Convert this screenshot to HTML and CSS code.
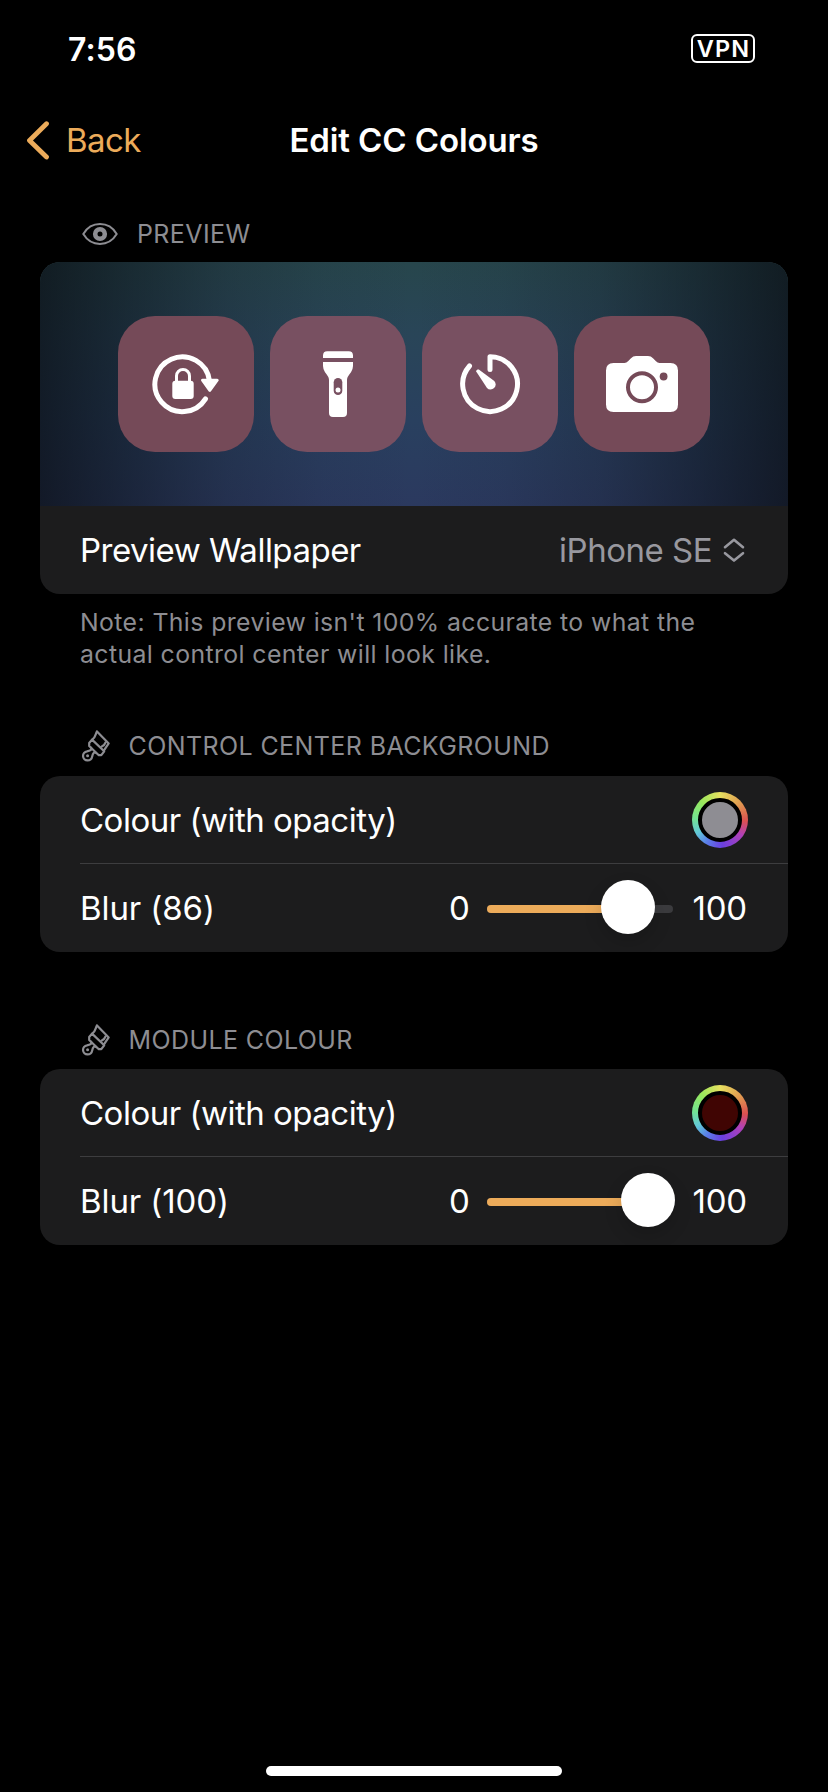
FILE: index.html
```html
<!DOCTYPE html>
<html lang="en">
<head>
<meta charset="utf-8">
<title>Edit CC Colours</title>
<link rel="stylesheet" href="styles.css">
</head>
<body>
<svg class="defs" width="0" height="0" aria-hidden="true">
  <symbol id="brush" viewBox="0 0 32 34">
    <g fill="none" stroke="currentColor" stroke-width="2.2" stroke-linejoin="round" stroke-linecap="round">
      <path d="M17 2.400 28.700 14.400 23.800 21.600M17 2.400C15.400 4.800 16 8 12.200 10.700"/>
      <path d="M12 10.600 24.200 22.300 21.300 26.100 18.800 26.200 9.200 17 9.200 14Z"/>
      <path d="M25.600 13.400C24.900 15.600 23.500 16.900 21.400 17.700"/>
      <path d="M11 18.600C12.600 20.700 9.600 21.800 7 22.300A4.600 4.600 0 1 0 12.200 27.400C12.800 24.600 14.200 22.300 16.200 24"/>
    </g>
    <circle cx="7.600" cy="26.700" r="1.500" fill="currentColor"/>
  </symbol>
</svg>
<main class="screen">
  <div class="status">
    <span class="time">7:56</span>
    <span class="vpn">VPN</span>
  </div>
  <header class="nav">
    <a class="back">
      <svg class="back-icon" width="24" height="40" viewBox="0 0 24 40"><path d="M20.500 3.700 3.500 20.500 20.500 37" fill="none" stroke="currentColor" stroke-width="4.800" stroke-linecap="round" stroke-linejoin="round"/></svg>
      <span class="back-label">Back</span>
    </a>
    <h1 class="title">Edit CC Colours</h1>
  </header>

  <section class="section">
    <h2 class="section-head section-head--preview">
      <svg width="36" height="24" viewBox="0 0 36 24"><path d="M1.300 12C4.600 6.500 10.800 2.100 18 2.100S31.400 6.500 34.700 12C31.400 17.500 25.200 21.900 18 21.900S4.600 17.500 1.300 12Z" fill="none" stroke="currentColor" stroke-width="2"/><circle cx="18" cy="12" r="4.800" fill="none" stroke="currentColor" stroke-width="4.600"/></svg>
      <span class="head-preview">PREVIEW</span>
    </h2>
    <div class="card">
      <div class="wallpaper">
        <div class="tile">
          <svg width="72" height="72" viewBox="0 0 72 72"><path d="M59.500 33A27.400 27.400 0 1 0 55.500 50.800" fill="none" stroke="#fff" stroke-width="5" stroke-linecap="round"/><path d="M52.500 32.200 67.200 32.200 59.800 42.300Z" fill="#fff" stroke="#fff" stroke-width="3" stroke-linejoin="round"/><rect x="22.300" y="32.700" width="21.400" height="18.300" rx="3" fill="#fff"/><path d="M26.500 34.500V28A6.500 6.500 0 0 1 39.500 28V34.500" fill="none" stroke="#fff" stroke-width="3"/></svg>
        </div>
        <div class="tile tile--inner">
          <svg width="72" height="72" viewBox="0 0 72 72"><path d="M21 10V7.500Q21 3.200 25.300 3.200H46.700Q51 3.200 51 7.500V10ZM21 14H51V18Q51 21 49 24.300 45 29 45 32V65Q45 69 41 69H31Q27 69 27 65V32Q27 29 23 24.300 21 21 21 18Z" fill="#fff"/><rect class="torch-slot" x="31.700" y="30" width="8.600" height="17" rx="4.300"/><circle cx="36" cy="42" r="2.500" fill="#fff"/></svg>
        </div>
        <div class="tile tile--inner">
          <svg width="72" height="72" viewBox="0 0 72 72"><path d="M15.500 18A27.400 27.400 0 1 0 36 8.700V21.500" fill="none" stroke="#fff" stroke-width="5" stroke-linecap="round" stroke-linejoin="round"/><path d="M24.800 21.600 40.300 33A5 5 0 1 1 33 39.900L22.200 23.400Q22.300 20.800 24.800 21.600Z" fill="#fff"/></svg>
        </div>
        <div class="tile">
          <svg width="72" height="72" viewBox="0 0 72 72"><path d="M7.500 15H18.500Q20.500 15 22 13.200L25 10.200Q27 8 30 8H42Q45 8 47 10.200L50 13.200Q51.500 15 53.500 15H64.500Q72 15 72 22.500V56.500Q72 64 64.500 64H7.500Q0 64 0 56.500V22.500Q0 15 7.500 15Z" fill="#fff"/><circle class="lens-ring" cx="36" cy="39.300" r="14"/><circle class="flash" cx="57.600" cy="28.500" r="3.900"/></svg>
        </div>
      </div>
      <div class="row">
        <span class="row-label">Preview Wallpaper</span>
        <span class="picker">
          <span class="picker-value">iPhone SE</span>
          <svg width="22" height="26" viewBox="0 0 22 26"><path d="M2 10.200 11 2.800 20 10.200M2 16.200 11 23.600 20 16.200" fill="none" stroke="currentColor" stroke-width="2.600" stroke-linecap="round" stroke-linejoin="round"/></svg>
        </span>
      </div>
    </div>
    <p class="note">Note: This preview isn't 100% accurate to what the<br>actual control center will look like.</p>
  </section>

  <section class="section section--background">
    <h2 class="section-head">
      <svg width="32" height="34"><use href="#brush"/></svg>
      <span>CONTROL CENTER BACKGROUND</span>
    </h2>
    <div class="card">
      <div class="row row--divided">
        <span class="row-label">Colour (with opacity)</span>
        <span class="well"><span class="well-fill well-fill--grey"></span></span>
      </div>
      <div class="row">
        <span class="row-label row-label--blur">Blur (86)</span>
        <span class="slider">
          <span class="bound">0</span>
          <span class="track"><span class="track-fill" style="width:141px"></span><span class="thumb" style="left:114px"></span></span>
          <span class="bound bound--max">100</span>
        </span>
      </div>
    </div>
  </section>

  <section class="section section--module">
    <h2 class="section-head">
      <svg width="32" height="34"><use href="#brush"/></svg>
      <span>MODULE COLOUR</span>
    </h2>
    <div class="card">
      <div class="row row--divided">
        <span class="row-label">Colour (with opacity)</span>
        <span class="well"><span class="well-fill well-fill--maroon"></span></span>
      </div>
      <div class="row">
        <span class="row-label row-label--blur">Blur (100)</span>
        <span class="slider">
          <span class="bound">0</span>
          <span class="track"><span class="track-fill" style="width:161px"></span><span class="thumb" style="left:134px"></span></span>
          <span class="bound bound--max">100</span>
        </span>
      </div>
    </div>
  </section>

  <div class="home"></div>
</main>
</body>
</html>
```
FILE: styles.css
```css
* { box-sizing: border-box; }
body {
  margin: 0;
  background: #000;
  color: #fff;
  font-family: Inter, "Liberation Sans", sans-serif;
}
svg { display: block; flex: none; }
.defs { position: absolute; }
.screen {
  display: flex;
  flex-direction: column;
  width: 828px;
  height: 1792px;
  overflow: hidden;
}
.status {
  display: flex;
  justify-content: space-between;
  align-items: center;
  height: 97px;
  padding: 0 73px 0 68px;
}
.time { padding-top: 3px; font-size: 32px; font-weight: 600; line-height: 40px; letter-spacing: 0.1px; }
.vpn {
  width: 64px;
  height: 29px;
  border: 2px solid #fff;
  border-radius: 6px;
  font-size: 23.5px;
  font-weight: 600;
  line-height: 25px;
  letter-spacing: 1.2px;
  text-align: center;
  padding-left: 1px;
}
.nav {
  display: grid;
  grid-template-columns: 1fr auto 1fr;
  align-items: center;
  height: 86px;
  padding: 0 26px;
}
.back { display: flex; align-items: center; color: #ecab5a; }
.back-label { margin-left: 16px; font-size: 33px; line-height: 40px; letter-spacing: -0.6px; }
.title { margin: 0; font-size: 33px; font-weight: 600; line-height: 40px; letter-spacing: -0.1px; }

.section { display: flex; flex-direction: column; padding: 0 40px; }
.section--background { margin-top: 52px; }
.section--module { margin-top: 64px; }
.section-head {
  display: flex;
  align-items: center;
  gap: 16.5px;
  height: 54px;
  margin: 0;
  padding: 0 0 6px 40px;
  color: #8d8d92;
  font-size: 25px;
  font-weight: 400;
  line-height: 32px;
  letter-spacing: 0.4px;
}
.section-head--preview { height: 79px; padding: 25px 0 2px 42px; gap: 19px; }
.section--module .section-head { height: 53px; padding-bottom: 6px; }
.card { border-radius: 20px; overflow: hidden; background: #1c1c1d; }
.wallpaper {
  display: flex;
  justify-content: center;
  align-items: center;
  gap: 16px;
  height: 244px;
  background:
    linear-gradient(90deg, rgba(10, 14, 20, 0.74) 0%, rgba(12, 18, 26, 0.52) 12%, rgba(18, 24, 36, 0.27) 25%, rgba(20, 26, 40, 0.08) 38%, rgba(20, 26, 40, 0) 50%, rgba(20, 26, 40, 0.08) 62%, rgba(18, 24, 36, 0.27) 75%, rgba(12, 18, 26, 0.52) 88%, rgba(10, 14, 20, 0.74) 100%),
    linear-gradient(180deg, #27464c 0%, #294558 30%, #29405f 65%, #2b395f 100%);
}
.tile {
  --tile: #754a58;
  display: grid;
  place-items: center;
  width: 136px;
  height: 136px;
  border-radius: 37px;
  background: var(--tile);
}
.tile--inner { --tile: #785061; }
.torch-slot { fill: var(--tile); }
.lens-ring { fill: none; stroke: var(--tile); stroke-width: 4px; }
.flash { fill: var(--tile); }

.row {
  display: flex;
  justify-content: space-between;
  align-items: center;
  height: 88px;
  padding: 0 40px;
  font-size: 33px;
  line-height: 40px;
}
.row--divided {
  background: linear-gradient(#3d3d3f, #3d3d3f) 40px 87px / 100% 1px no-repeat;
}
.row-label { white-space: nowrap; letter-spacing: -0.5px; }
.row-label--blur { letter-spacing: -0.1px; }
.picker { display: flex; align-items: center; gap: 11px; margin-right: 3px; color: #98989f; }
.picker-value { letter-spacing: -0.5px; }
.note {
  margin: 12px 0 0 40px;
  color: #8d8d92;
  font-size: 24.8px;
  line-height: 32px;
  letter-spacing: 0.4px;
  white-space: nowrap;
}
.well {
  display: grid;
  place-items: center;
  width: 56px;
  height: 56px;
  border-radius: 50%;
  background: conic-gradient(#e6e060, #e09a50 50deg, #dc5050 92deg, #b040b8 125deg, #6a3fe0 175deg, #5a80e8 212deg, #62c8d8 240deg, #74e490 275deg, #98e85c 315deg, #e6e060 360deg);
}
.well-fill { width: 44px; height: 44px; border: 4px solid #000; border-radius: 50%; }
.well-fill--grey { background: #8e8d93; }
.well-fill--maroon { background: #400503; }
.slider { display: flex; align-items: center; margin-right: 1px; }
.bound { width: 20px; text-align: center; }
.bound--max { width: 56px; letter-spacing: -0.2px; text-align: right; }
.track {
  position: relative;
  width: 186px;
  height: 8px;
  margin: 2px 18px 0 18px;
  border-radius: 4px;
  background: #3b3b3e;
}
.track-fill { display: block; height: 8px; border-radius: 4px; background: #ecab5a; }
.thumb {
  position: absolute;
  top: -25px;
  width: 54px;
  height: 54px;
  border-radius: 50%;
  background: #fff;
  box-shadow: 0 8px 18px rgba(0, 0, 0, 0.16);
}
.home {
  width: 296px;
  height: 10px;
  margin: auto auto 16px;
  border-radius: 5px;
  background: #fff;
}
```
